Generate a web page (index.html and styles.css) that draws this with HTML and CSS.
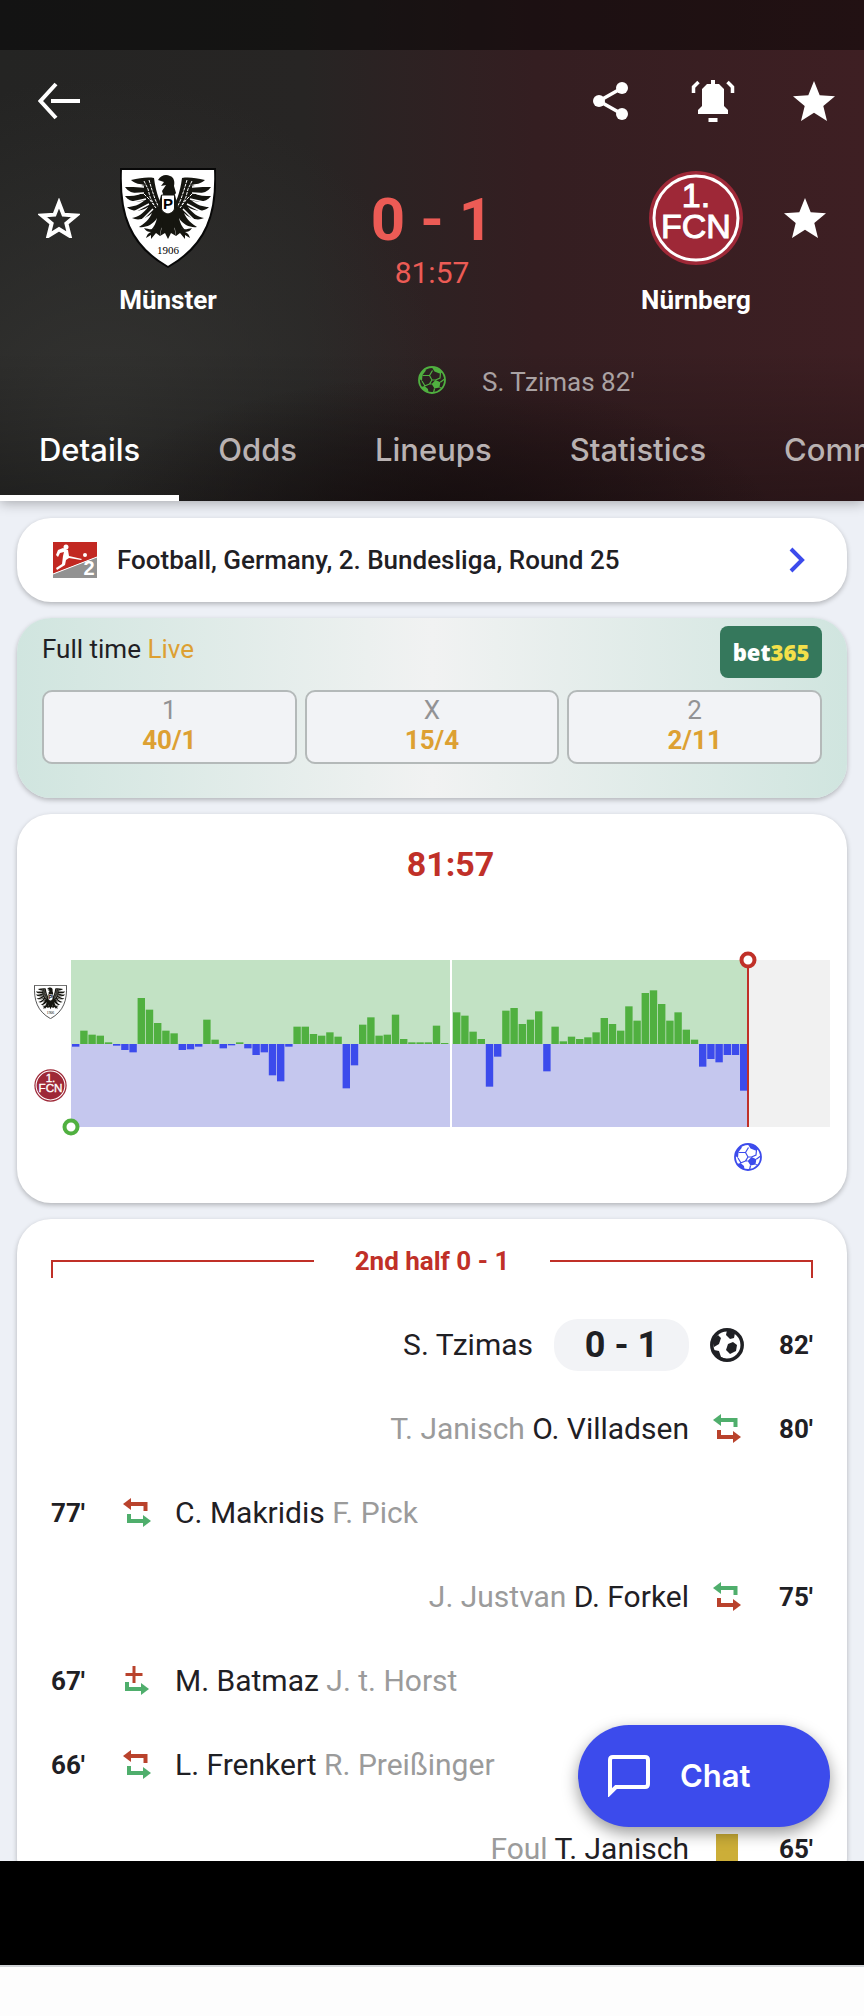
FILE: index.html
```html
<!DOCTYPE html>
<html lang="en">
<head>
    <meta charset="UTF-8">
    <meta name="viewport" content="width=device-width, initial-scale=1.0">
    <title>Münster - Nürnberg</title>
    <link rel="stylesheet" href="styles.css">
</head>
<body>
    <!-- Shared symbols -->
    <svg class="symbols" aria-hidden="true">
        <symbol id="star" viewBox="0 0 42 40">
            <path d="M21 0l5.700 14.300L42 15.200 30.300 25 34 40 21 31.800 8 40l3.700-15L0 15.200l15.300-.9z" fill="currentColor"/>
        </symbol>
        <symbol id="star-outline" viewBox="0 0 42 40">
            <path d="M21 5l4.500 11.700 12.500.8-9.600 8 3.100 12.200L21 31.200l-10.500 6.500 3.100-12.200-9.600-8 12.500-.8z" fill="none" stroke="currentColor" stroke-width="4"/>
        </symbol>
        <symbol id="ball" viewBox="0 0 28 28">
            <circle cx="14" cy="14" r="13" fill="none" stroke="currentColor" stroke-width="1.800"/>
            <path d="M14 1.500l7 1.300 3 4-2.500.7-5-2zM1.500 13l1-5 4-4.500 1.500 1-3.500 4.500-.5 6zM17.500 14l4.800 2.300-.8 5.200-5 1-2.800-4.500zM3 21l3.500-1 3.500 3 .5 3.500c-3-.5-5.500-2.500-7.500-5.500z" fill="currentColor"/>
            <path d="M4 15l3 5M4.500 9.500h7l3-5M11.500 9.500l2.500 4.500h3.500M14 14l-2.500 4h2.200M11.500 18L6.500 20M22.300 16.300l4-3M21.500 21.500l2 .5M16.500 22.500l-1 4.500M17.500 14l4.500-2 .5-5" fill="none" stroke="currentColor" stroke-width="1.200"/>
        </symbol>
        <symbol id="muenster" viewBox="0 0 96 100">
            <path d="M1 1h94c2 44-8 76-47 98C9 77-1 45 1 1z" fill="#fff" stroke="#080808" stroke-width="2"/>
            <g id="wing" fill="#15150f">
                <path d="M34 10c-7-1-14 0-23 2 4 4 9 4 14 5-6 2-13 2-20 2 4 6 11 7 18 6-6 3-12 3-18 3 4 6 12 7 20 4-6 5-12 7-18 7 5 5 13 5 21 0-4 6-10 10-16 11 6 3 14 1 20-5-3 7-8 11-13 14 6 1 14-2 18-9-1 5-3 9-6 12 7-2 11-7 13-14l1-8c-5-4-9-15-11-30z"/>
                <path d="M43 48l-7 10c-2 5-7 3-12 2 2 3 4 4 7 4-3 1-4 3-5 6l5-3v4l5-6 4 3 1-7 5-8z"/>
                <path d="M10 18l14 1M7 26l17-1M8 35l18-4M12 45l17-9M20 54l13-13" fill="none" stroke="#fff" stroke-width="1.500"/>
                <path d="M24 13l4 8 2 8 4 8M29 12l3 10 3 9 4 9M24 26l6 6 6 8" fill="none" stroke="#fff" stroke-width="1" stroke-dasharray="3 1"/>
            </g>
            <use href="#wing" transform="translate(96 0) scale(-1 1)"/>
            <path d="M38 12c3-5 8-6 12-4 4 1 5 6 4 10l2 7-3 4h-9l-2-6 4-6-5 1 3-4z" fill="#15150f"/>
            <path d="M41 27h14l5 20-7 6 3 15-5-3-3 6-3-6-5 3 3-15-7-6z" fill="#15150f"/>
            <path d="M41.500 27h13v13c0 3-3 5-6.500 6-4-1-6.500-3-6.500-6z" fill="#fff" stroke="#15150f" stroke-width="1"/>
            <text x="48" y="41" class="crest-p">P</text>
            <text x="48" y="86" class="crest-year">1906</text>
        </symbol>
        <symbol id="nuernberg" viewBox="0 0 96 96">
            <circle cx="48" cy="48" r="47" fill="#9e2837"/>
            <circle cx="48" cy="48" r="42" fill="none" stroke="#fff" stroke-width="3"/>
            <text x="48" y="37" class="crest-one">1.</text>
            <text x="48" y="68" class="crest-fcn">FCN</text>
        </symbol>
        <symbol id="sub-top" viewBox="0 0 30 30">
            <path d="M9 6h14.500v7" fill="none" stroke="currentColor" stroke-width="4"/>
            <path d="M9 0v12L1 6z" fill="currentColor"/>
        </symbol>
        <symbol id="sub-bottom" viewBox="0 0 30 30">
            <path d="M7 16v7h14" fill="none" stroke="currentColor" stroke-width="4"/>
            <path d="M21 17v12l8-6z" fill="currentColor"/>
        </symbol>
    </svg>

    <header class="header">
        <div class="status-bar"></div>

        <div class="toolbar">
            <button class="icon-btn" aria-label="Back">
                <svg width="42" height="38" viewBox="0 0 42 38" fill="none" stroke="#fff" stroke-width="4"><path d="M18 2L2.500 19 18 36M13 19h29"/></svg>
            </button>
            <div class="toolbar-actions">
                <button class="icon-btn" aria-label="Share">
                    <svg width="40" height="40" viewBox="0 0 40 40"><path d="M29 7L6 20l23 13" fill="none" stroke="#fff" stroke-width="3.500"/><g fill="#fff"><circle cx="29" cy="7" r="6"/><circle cx="6" cy="20" r="6"/><circle cx="29" cy="33" r="6"/></g></svg>
                </button>
                <button class="icon-btn" aria-label="Notifications">
                    <svg width="44" height="44" viewBox="0 0 44 44"><path d="M20 1h4v4h4l5 5v17l4 4v4H7v-4l4-4V10l5-5h4zM17.500 39h9v4h-9z" fill="#fff"/><path d="M2.500 14V8l5-5M41.500 14V8l-5-5" fill="none" stroke="#fff" stroke-width="3.500"/></svg>
                </button>
                <button class="icon-btn" aria-label="Favourite match">
                    <svg width="42" height="40"><use href="#star"/></svg>
                </button>
            </div>
        </div>

        <div class="match">
            <button class="icon-btn fav" aria-label="Follow Münster"><svg width="42" height="40"><use href="#star-outline"/></svg></button>
            <div class="team">
                <svg class="crest" width="96" height="100"><use href="#muenster"/></svg>
                <span>Münster</span>
            </div>
            <div class="score">
                <strong>0 - 1</strong>
                <span>81:57</span>
            </div>
            <div class="team">
                <svg class="crest" width="96" height="100"><use href="#nuernberg"/></svg>
                <span>Nürnberg</span>
            </div>
            <button class="icon-btn fav" aria-label="Unfollow Nürnberg"><svg width="42" height="40"><use href="#star"/></svg></button>
        </div>

        <div class="scorers">
            <svg width="28" height="28"><use href="#ball"/></svg>
            <span>S. Tzimas 82'</span>
        </div>

        <nav class="tabs">
            <a href="#details" class="active">Details</a>
            <a href="#odds">Odds</a>
            <a href="#lineups">Lineups</a>
            <a href="#statistics">Statistics</a>
            <a href="#commentary">Commentary</a>
        </nav>
    </header>

    <main class="content">
        <a href="#league" class="card league">
            <svg width="44" height="36" viewBox="0 0 44 36">
                <path d="M0 0h44v15L0 32z" fill="#c22822"/>
                <path d="M0 32l44-17v21H0z" fill="#929292"/>
                <path d="M0 32l44-17" stroke="#fff"/>
                <circle cx="13" cy="5" r="2.500" fill="#fff"/>
                <path d="M3 13l2-5 5-2 5 2 1 6 13 3-1 1-12-2-3 2-1 5-8 5-1-2 6-4 1-8 1-4-4 1-2 4z" fill="#fff"/>
                <circle cx="32" cy="13" r="2" fill="#fff"/>
                <text x="36" y="33" class="league-two">2</text>
            </svg>
            <span>Football, Germany, 2. Bundesliga, Round 25</span>
            <svg class="chevron" width="18" height="26" viewBox="0 0 18 26"><path d="M3 2l11 11L3 24" fill="none" stroke="#3c4bec" stroke-width="4"/></svg>
        </a>

        <section class="card odds">
            <div class="odds-head">
                <span>Full time <em>Live</em></span>
                <a href="#bet365" class="bookmaker">bet<b>365</b></a>
            </div>
            <div class="odds-row">
                <button><span>1</span><b>40/1</b></button>
                <button><span>X</span><b>15/4</b></button>
                <button><span>2</span><b>2/11</b></button>
            </div>
        </section>

        <section class="card momentum">
            <h2>81:57</h2>
            <svg viewBox="0 0 830 248" class="graph">
                <use href="#muenster" x="17" y="39" width="33" height="34"/>
                <use href="#nuernberg" x="17" y="123" width="33" height="33"/>
                <rect x="54" y="14" width="677" height="84" fill="#c2e2c4"/>
                <rect x="54" y="98" width="677" height="83" fill="#c5c7ee"/>
                <rect x="731" y="14" width="82" height="167" fill="#f1f1f1"/>
                <g id="bars"></g>
                <rect x="433" y="14" width="2" height="167" fill="#fff"/>
                <rect x="730" y="14" width="2" height="167" fill="#c03028"/>
                <circle cx="54" cy="181" r="6.500" fill="#fff" stroke="#50b040" stroke-width="4"/>
                <circle cx="731" cy="14" r="6.500" fill="#fff" stroke="#c03028" stroke-width="4"/>
                <use href="#ball" x="717" y="197" width="28" height="28" class="away"/>
            </svg>
        </section>

        <section class="card events">
            <div class="period"><i></i><h3>2nd half 0 - 1</h3><i></i></div>
            <ul>
                <li class="right">
                    <span class="names">S. Tzimas</span>
                    <strong class="pill">0 - 1</strong>
                    <span class="event-icon"><svg width="34" height="34" viewBox="0 0 34 34"><circle cx="17" cy="17" r="15.200" fill="none" stroke="#1f2024" stroke-width="3.500"/><path d="M17 2l8 3-1 5-4 1-4-4zM2 12l6-5 3 3-2 6-5 3zM18 16l5-2 4 3-1 6-6 3-4-4zM4 22l5 1 2 6 5 2-2 1c-5-1-9-4-10-10z" fill="#1f2024"/></svg></span>
                    <b class="minute">82'</b>
                </li>
                <li class="right">
                    <span class="names"><small>T. Janisch</small> O. Villadsen</span>
                    <span class="event-icon"><svg width="30" height="30"><use href="#sub-top" class="in"/><use href="#sub-bottom" class="out"/></svg></span>
                    <b class="minute">80'</b>
                </li>
                <li>
                    <b class="minute">77'</b>
                    <span class="event-icon"><svg width="30" height="30"><use href="#sub-top" class="out"/><use href="#sub-bottom" class="in"/></svg></span>
                    <span class="names">C. Makridis <small>F. Pick</small></span>
                </li>
                <li class="right">
                    <span class="names"><small>J. Justvan</small> D. Forkel</span>
                    <span class="event-icon"><svg width="30" height="30"><use href="#sub-top" class="in"/><use href="#sub-bottom" class="out"/></svg></span>
                    <b class="minute">75'</b>
                </li>
                <li>
                    <b class="minute">67'</b>
                    <span class="event-icon"><svg width="30" height="30" viewBox="2 0 30 30"><path d="M14 0v17M5.500 8.500h17" stroke="#b9422c" stroke-width="3"/><use href="#sub-bottom" class="in" width="30" height="30"/></svg></span>
                    <span class="names">M. Batmaz <small>J. t. Horst</small></span>
                </li>
                <li>
                    <b class="minute">66'</b>
                    <span class="event-icon"><svg width="30" height="30"><use href="#sub-top" class="out"/><use href="#sub-bottom" class="in"/></svg></span>
                    <span class="names">L. Frenkert <small>R. Preißinger</small></span>
                </li>
                <li class="right">
                    <span class="names"><small>Foul</small> T. Janisch</span>
                    <span class="event-icon"><i class="yellow-card"></i></span>
                    <b class="minute">65'</b>
                </li>
            </ul>
        </section>

        <button class="chat">
            <svg width="42" height="42" viewBox="0 0 42 42"><path d="M2 38V5q0-3 3-3h32q3 0 3 3v24q0 3-3 3H8z" fill="none" stroke="#fff" stroke-width="4"/></svg>
            Chat
        </button>
    </main>

    <div class="ad-banner"></div>
    <div class="bottom-bar"></div>

    <script src="script.js"></script>
</body>
</html>
```
FILE: styles.css
```css
* {
    box-sizing: border-box;
}
body {
    margin: 0;
    height: 100vh;
    display: flex;
    flex-direction: column;
    overflow: hidden;
    background: #edf0f6;
    color: #1f2024;
    font-family: Roboto, "Liberation Sans", sans-serif;
    font-size: 26px;
    line-height: 32px;
}
a {
    color: inherit;
    text-decoration: none;
}
button {
    font: inherit;
    color: inherit;
    cursor: pointer;
}
h2, h3, ul {
    margin: 0;
    padding: 0;
}
.symbols {
    display: none;
}

/* Header */
.header {
    flex: none;
    position: relative;
    z-index: 1;
    color: #fff;
    background:
        radial-gradient(ellipse 40% 30% at 50% 105%, rgba(18, 10, 11, 0.8), transparent),
        linear-gradient(to bottom, transparent 70%, rgba(0, 0, 0, 0.3)),
        radial-gradient(circle at 12% 85%, #333331, transparent 40%),
        linear-gradient(to right, #242423 0%, #272524 35%, #341e21 62%, #3e1f23 100%);
    box-shadow: 0 2px 12px rgba(0, 0, 0, 0.3);
}
.status-bar {
    height: 50px;
    background: rgba(0, 0, 0, 0.45);
}
.toolbar {
    height: 102px;
    padding: 0 29px 0 38px;
    display: flex;
    align-items: center;
    justify-content: space-between;
}
.toolbar-actions {
    display: flex;
    align-items: center;
    gap: 58px;
}
.icon-btn {
    padding: 0;
    border: 0;
    background: none;
    display: flex;
    align-items: center;
}
.match {
    padding: 16px 38px 0;
    display: grid;
    grid-template-columns: 42px 176px 1fr 176px 42px;
}
.fav {
    height: 100px;
}
.team {
    display: flex;
    flex-direction: column;
    align-items: center;
    gap: 16px;
    font-weight: bold;
}
.score {
    padding-top: 20px;
    display: flex;
    flex-direction: column;
    align-items: center;
    gap: 4px;
    color: #ec5b55;
}
.score strong {
    font-size: 60px;
    line-height: 64px;
}
.score span {
    font-size: 30px;
    line-height: 34px;
}
.scorers {
    padding-top: 50px;
    display: grid;
    grid-template-columns: 1fr 28px 1fr;
    column-gap: 36px;
    color: #aaa2a3;
}
.scorers svg {
    grid-column: 2;
    color: #50b040;
}
.tabs {
    display: flex;
    height: 103px;
    overflow: hidden;
    font-family: Inter, sans-serif;
    font-size: 31px;
    font-weight: 500;
    color: #b9b2b2;
}
.tabs a {
    flex: none;
    padding: 36px 39px 0;
    border-bottom: 6px solid transparent;
}
.tabs .active {
    color: #fff;
    border-bottom-color: #fff;
}

/* Cards */
.content {
    flex: 1;
    min-height: 0;
    overflow: hidden;
    position: relative;
    padding: 17px 17px 0;
    display: flex;
    flex-direction: column;
    gap: 16px;
}
.card {
    flex: none;
    border-radius: 34px;
    background: #fff;
    box-shadow: 0 2px 5px rgba(0, 0, 0, 0.25);
}
.league {
    height: 84px;
    padding: 0 41px 0 36px;
    display: flex;
    align-items: center;
    gap: 20px;
    font-weight: 500;
}
.chevron {
    margin-left: auto;
}
.odds {
    padding: 8px 25px 34px;
    background: linear-gradient(to right, #d0e5df, #f1f2f2 50%, #d0e5df);
}
.odds-head {
    display: flex;
    justify-content: space-between;
    margin-bottom: 12px;
    line-height: 46px;
}
.odds-head em {
    color: #dda032;
    font-style: normal;
}
.bookmaker {
    width: 102px;
    height: 52px;
    border-radius: 8px;
    background: #35785c;
    color: #fff;
    font-family: "Open Sans", sans-serif;
    font-size: 22px;
    font-weight: 800;
    line-height: 52px;
    text-align: center;
}
.bookmaker b {
    color: #f4e04a;
    font-weight: 800;
}
.odds-row {
    display: grid;
    grid-template-columns: repeat(3, 1fr);
    gap: 8px;
}
.odds-row button {
    height: 74px;
    padding: 0 0 4px;
    border: 2px solid #b4b9b9;
    border-radius: 10px;
    background: #f2f3f6;
    display: flex;
    flex-direction: column;
    align-items: center;
    justify-content: center;
    line-height: 30px;
    color: #929294;
}
.odds-row b {
    color: #dda032;
}

/* Momentum graph */
.momentum h2 {
    /* centred over the plot, not over the crests */
    padding: 30px 0 0 37px;
    text-align: center;
    color: #c03028;
    font-size: 34px;
    line-height: 40px;
}
.graph {
    display: block;
    width: 100%;
    margin-top: 62px;
    padding-bottom: 9px;
}
.home {
    fill: #50b040;
}
.away {
    fill: #3c4bec;
    color: #3c4bec;
}

/* Events */
.events {
    padding: 26px 34px 0;
}
.period {
    height: 58px;
    display: flex;
    color: #c03028;
}
.period i {
    flex: 1;
    height: 18px;
    margin-top: 15px;
    border: 0 solid #c03028;
    border-top-width: 2px;
}
.period i:first-child {
    border-left-width: 2px;
}
.period i:last-child {
    border-right-width: 2px;
}
.period h3 {
    width: 236px;
    text-align: center;
    font-size: 26px;
}
.events li {
    height: 84px;
    display: flex;
    align-items: center;
}
.events .right {
    justify-content: flex-end;
}
.names {
    font-size: 30px;
}
.names small {
    font-size: 30px;
    color: #9b9b9b;
}
.minute {
    width: 34px;
    white-space: nowrap;
}
.event-icon {
    width: 34px;
    margin: 0 21px 0 35px;
    display: flex;
    justify-content: center;
}
.right .event-icon {
    margin: 0 35px 0 21px;
}
.right .minute {
    display: flex;
    justify-content: flex-end;
}
.pill {
    width: 135px;
    margin-left: 21px;
    border-radius: 24px;
    background: #f2f3f6;
    text-align: center;
    font-size: 36px;
    line-height: 52px;
}
.in {
    color: #4fae6c;
}
.out {
    color: #b9422c;
}
.yellow-card {
    width: 22px;
    height: 30px;
    background: #ccae38;
}

/* Chat button floats over the list */
.chat {
    position: absolute;
    right: 34px;
    bottom: 34px;
    width: 252px;
    height: 102px;
    padding: 0 30px;
    border: 0;
    border-radius: 51px;
    background: #3c4bec;
    color: #fff;
    box-shadow: 0 6px 16px rgba(0, 0, 0, 0.4);
    display: flex;
    align-items: center;
    gap: 30px;
    font-family: Inter, sans-serif;
    font-size: 31px;
    font-weight: 600;
}
.ad-banner {
    flex: none;
    height: 104px;
    background: #000;
}
.bottom-bar {
    flex: none;
    height: 51px;
    border-top: 2px solid #cfd2d6;
    background: #fdfdfd;
}

/* Lettering inside the crests */
.crest-p, .crest-year, .crest-one, .crest-fcn, .league-two {
    text-anchor: middle;
    font-family: "Liberation Sans", sans-serif;
    font-weight: normal;
}
.crest-p {
    font-size: 15px;
    font-weight: bold;
}
.crest-year {
    font-family: "Liberation Serif", serif;
    font-size: 11px;
}
.crest-one, .crest-fcn {
    fill: #fff;
    stroke: #fff;
    stroke-width: 1px;
    font-size: 34px;
}
.league-two {
    fill: #fff;
    font-size: 20px;
    font-weight: bold;
}
```
FILE: script.js
```js
// Attack momentum per minute, positive = home, negative = away
const firstHalf = [-8, 40, 28, 25, 5, -5, -18, -25, 138, 103, 63, 40, 32, -18, -16, -8, 73, 13, -13, -4, 5, -13, -33, -25, -94, -112, -8, 52, 52, 30, 25, 35, 22, -133, -64, 58, 80, 25, 28, 88, 15, 5, 5, 5, 55, 3];
const secondHalf = [95, 85, 37, 15, -128, -38, 100, 108, 60, 73, 98, -82, 52, 8, 22, 15, 20, 35, 78, 60, 40, 113, 70, 153, 161, 120, 70, 95, 43, 13, -68, -45, -55, -33, -33, -140];

const middle = 98;
const step = 8.2;

function drawHalf(values, start) {
    const group = document.getElementById('bars');
    values.forEach((value, i) => {
        const bar = document.createElementNS('http://www.w3.org/2000/svg', 'rect');
        const height = Math.abs(value) / 3;
        bar.setAttribute('class', value > 0 ? 'home' : 'away');
        bar.setAttribute('x', start + i * step);
        bar.setAttribute('y', value > 0 ? middle - height : middle);
        bar.setAttribute('width', 7.4);
        bar.setAttribute('height', height);
        group.appendChild(bar);
    });
}

drawHalf(firstHalf, 55);
drawHalf(secondHalf, 436);
```
